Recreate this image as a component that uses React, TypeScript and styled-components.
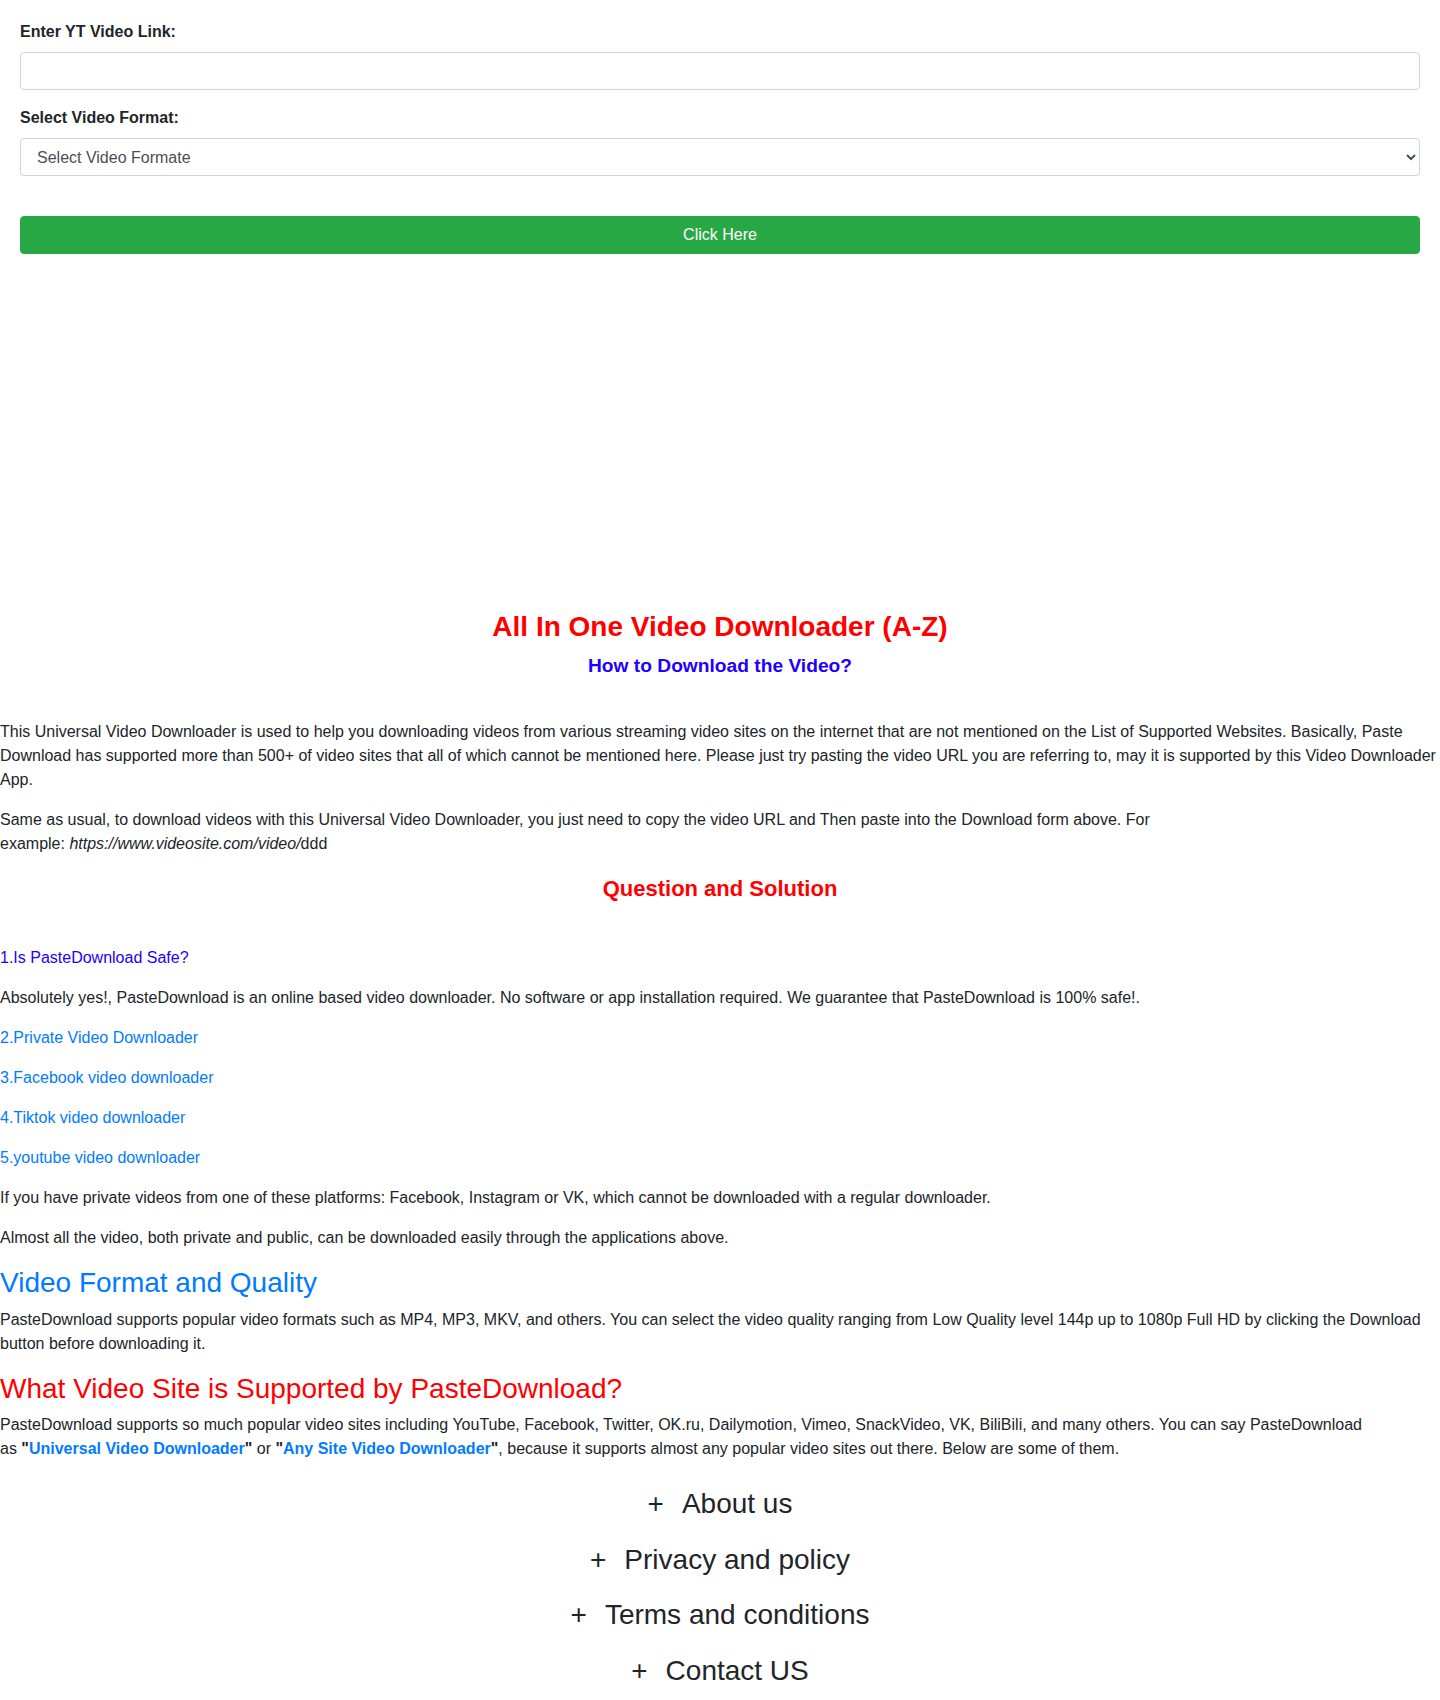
import React from "react";
import styled, { createGlobalStyle } from "styled-components";

const Global = createGlobalStyle`
  html, body { margin: 0; padding: 0; background: #fff; }
  body {
    font-family: "Liberation Sans", Arial, sans-serif;
    font-size: 16px;
    line-height: 1.5;
    color: #212529;
  }
  * { box-sizing: border-box; }
`;

const FormCard = styled.form`
  display: flex;
  flex-direction: column;
  padding: 20px 20px 0;
`;

const Label = styled.label`
  display: block;
  font-weight: 700;
  font-size: 16px;
  line-height: 24px;
  margin-bottom: 8px;
`;

const fieldCss = `
  display: block;
  width: 100%;
  height: 38px;
  padding: 6px 12px;
  font-family: "Liberation Sans", Arial, sans-serif;
  font-size: 16px;
  line-height: 1.5;
  color: #495057;
  background: #fff;
  border: 1px solid #ced4da;
  border-radius: 4px;
`;

const TextInput = styled.input`
  ${fieldCss}
  margin-bottom: 16px;
`;

const Select = styled.select`
  ${fieldCss}
  margin-bottom: 40px;
`;

const SubmitButton = styled.button`
  display: block;
  width: 100%;
  height: 38px;
  border: 1px solid #28a745;
  border-radius: 4px;
  background: #28a745;
  color: #fff;
  font-family: "Liberation Sans", Arial, sans-serif;
  font-size: 16px;
  line-height: 1.5;
  cursor: pointer;
`;

const AdSlot = styled.div`
  height: 356px;
`;

const Article = styled.main`
  display: flex;
  flex-direction: column;
`;

const Title = styled.h1`
  margin: 0 0 10px;
  text-align: center;
  font-size: 28px;
  line-height: 1.2;
  font-weight: 700;
  color: #ff0000;
`;

const SubTitle = styled.h2<{ $color: string; $size: number; $mt?: number; $mb?: number }>`
  margin: ${(p) => p.$mt ?? 0}px 0 ${(p) => p.$mb ?? 0}px;
  text-align: center;
  font-size: ${(p) => p.$size}px;
  line-height: 1.2;
  font-weight: 700;
  color: ${(p) => p.$color};
`;

const Para = styled.p`
  margin: 0 0 16px;
  font-size: 16px;
  line-height: 24px;
  color: #212529;
`;

const LinkLine = styled.p<{ $color: string }>`
  margin: 0 0 16px;
  font-size: 16px;
  line-height: 24px;
  a {
    color: ${(p) => p.$color};
    text-decoration: none;
  }
`;

const SectionHeading = styled.h3<{ $color: string }>`
  margin: 0 0 8px;
  font-size: 28px;
  line-height: 1.2;
  font-weight: 400;
  color: ${(p) => p.$color};
`;

const StrongLink = styled.a`
  color: #007bff;
  font-weight: 700;
  text-decoration: none;
`;

const Footer = styled.ul`
  list-style: none;
  margin: -1px 0 0;
  padding: 0;
  display: flex;
  flex-direction: column;
  align-items: center;
`;

const FooterItem = styled.li`
  display: flex;
  align-items: baseline;
  font-size: 28px;
  line-height: 55.5px;
  color: #212529;
`;

const Plus = styled.span`
  margin-right: 18px;
`;

const links = [
  "2.Private Video Downloader",
  "3.Facebook video downloader",
  "4.Tiktok video downloader",
  "5.youtube video downloader",
];

const footerItems = ["About us", "Privacy and policy", "Terms and conditions", "Contact US"];

export default function App() {
  return (
    <>
      <Global />
      <FormCard onSubmit={(e) => e.preventDefault()}>
        <Label htmlFor="link">Enter YT Video Link:</Label>
        <TextInput id="link" type="text" />
        <Label htmlFor="fmt">Select Video Format:</Label>
        <Select id="fmt" defaultValue="">
          <option value="">Select Video Formate</option>
          <option value="mp4">MP4</option>
          <option value="mp3">MP3</option>
        </Select>
        <SubmitButton type="submit">Click Here</SubmitButton>
      </FormCard>
      <AdSlot />
      <Article>
        <Title>All In One Video Downloader (A-Z)</Title>
        <SubTitle $color="#2200ff" $size={19.2} $mb={43}>
          How to Download the Video?
        </SubTitle>
        <Para>
          This Universal Video Downloader is used to help you downloading videos from various streaming video sites on the
          internet that are not mentioned on the List of Supported Websites. Basically, Paste Download has supported more than
          500+ of video sites that all of which cannot be mentioned here. Please just try pasting the video URL you are
          referring to, may it is supported by this Video Downloader App.
        </Para>
        <Para>
          Same as usual, to download videos with this Universal Video Downloader, you just need to copy the video URL and Then
          paste into the Download form above. For
          <br />
          example: <i>https://www.videosite.com/video/</i>ddd
        </Para>
        <SubTitle $color="#ff0000" $size={22} $mt={4} $mb={44}>
          Question and Solution
        </SubTitle>
        <LinkLine $color="#2200ff">
          <a href="#safe">1.Is PasteDownload Safe?</a>
        </LinkLine>
        <Para>
          Absolutely yes!, PasteDownload is an online based video downloader. No software or app installation required. We
          guarantee that PasteDownload is 100% safe!.
        </Para>
        {links.map((l) => (
          <LinkLine key={l} $color="#007bff">
            <a href="#l">{l}</a>
          </LinkLine>
        ))}
        <Para>
          If you have private videos from one of these platforms: Facebook, Instagram or VK, which cannot be downloaded with a
          regular downloader.
        </Para>
        <Para>Almost all the video, both private and public, can be downloaded easily through the applications above.</Para>
        <SectionHeading $color="#007bff">Video Format and Quality</SectionHeading>
        <Para>
          PasteDownload supports popular video formats such as MP4, MP3, MKV, and others. You can select the video quality
          ranging from Low Quality level 144p up to 1080p Full HD by clicking the Download button before downloading it.
        </Para>
        <SectionHeading $color="#ff0000">What Video Site is Supported by PasteDownload?</SectionHeading>
        <Para>
          PasteDownload supports so much popular video sites including YouTube, Facebook, Twitter, OK.ru, Dailymotion, Vimeo,
          SnackVideo, VK, BiliBili, and many others. You can say PasteDownload
          <br />
          as <b>"</b>
          <StrongLink href="#u">Universal Video Downloader</StrongLink>
          <b>"</b> or <b>"</b>
          <StrongLink href="#a">Any Site Video Downloader</StrongLink>
          <b>"</b>, because it supports almost any popular video sites out there. Below are some of them.
        </Para>
        <Footer>
          {footerItems.map((f) => (
            <FooterItem key={f}>
              <Plus>+</Plus>
              {f}
            </FooterItem>
          ))}
        </Footer>
      </Article>
    </>
  );
}
